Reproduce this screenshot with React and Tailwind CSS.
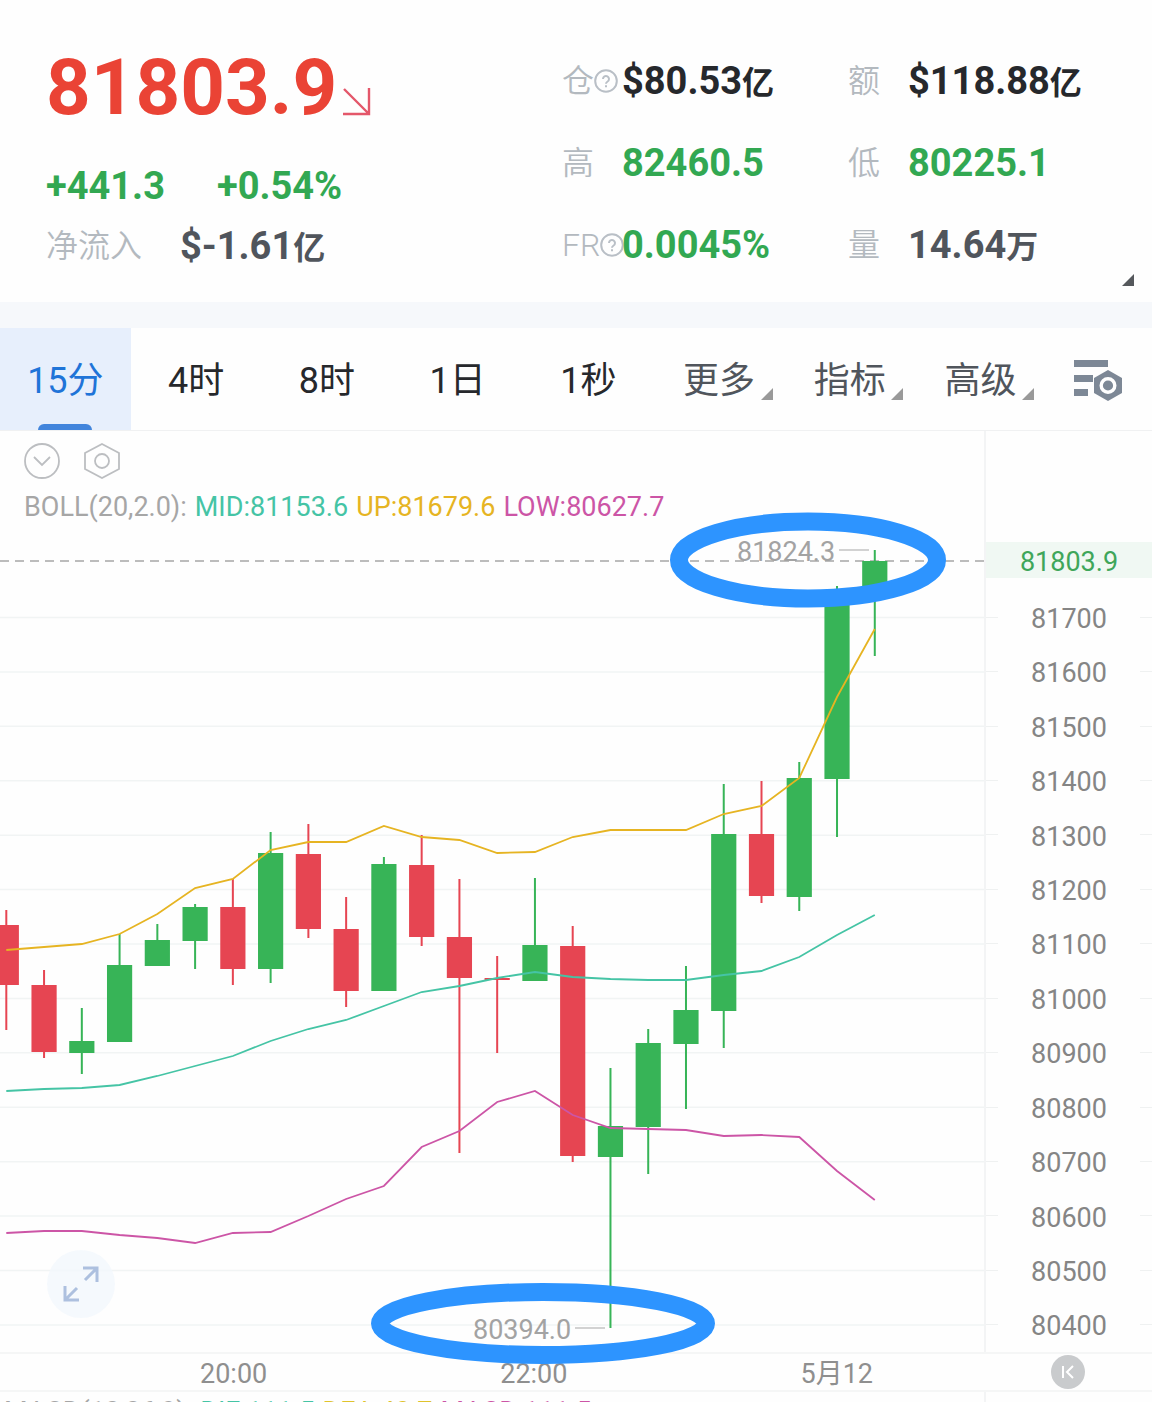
import { useState } from 'react';

const stats = [
  { label: '仓', help: true, value: '$80.53', unit: '亿', color: 'text-[#26282c]' },
  { label: '额', value: '$118.88', unit: '亿', color: 'text-[#26282c]' },
  { label: '高', value: '82460.5', color: 'text-[#32a852]' },
  { label: '低', value: '80225.1', color: 'text-[#32a852]' },
  { label: 'FR', help: true, value: '0.0045%', color: 'text-[#32a852]' },
  { label: '量', value: '14.64', unit: '万', color: 'text-[#50555c]' }
];

const tabs = [
  { label: '15分' },
  { label: '4时' },
  { label: '8时' },
  { label: '1日' },
  { label: '1秒' },
  { label: '更多', menu: true },
  { label: '指标', menu: true },
  { label: '高级', menu: true }
];

const prices = [81700, 81600, 81500, 81400, 81300, 81200, 81100, 81000, 80900, 80800, 80700, 80600, 80500, 80400];

// high, body top, body bottom, low, direction
const candles = [
  [910, 925, 985, 1030, 'down'],
  [970, 985, 1052, 1058, 'down'],
  [1008, 1041, 1053, 1074, 'up'],
  [934, 965, 1042, 1042, 'up'],
  [924, 940, 966, 966, 'up'],
  [904, 907, 941, 969, 'up'],
  [879, 907, 969, 985, 'down'],
  [832, 853, 969, 983, 'up'],
  [824, 854, 929, 938, 'down'],
  [897, 929, 991, 1007, 'down'],
  [857, 864, 991, 991, 'up'],
  [835, 865, 937, 946, 'down'],
  [879, 937, 978, 1153, 'down'],
  [956, 978, 980, 1053, 'down'],
  [878, 945, 981, 981, 'up'],
  [926, 946, 1156, 1162, 'down'],
  [1068, 1126, 1157, 1328, 'up'],
  [1029, 1043, 1127, 1174, 'up'],
  [966, 1010, 1044, 1109, 'up'],
  [784, 834, 1011, 1048, 'up'],
  [781, 834, 896, 903, 'down'],
  [762, 778, 897, 911, 'up'],
  [586, 598, 779, 837, 'up'],
  [550, 561, 590, 656, 'up']
];

const bands = [
  { color: '#e6b422', ys: [950, 947, 944, 934, 914, 888, 879, 850, 842, 842, 826, 837, 840, 853, 852, 837, 830, 830, 830, 814, 806, 778, 697, 629] },
  { color: '#45c4a5', ys: [1091, 1089, 1088, 1085, 1076, 1066, 1056, 1041, 1029, 1020, 1006, 992, 986, 978, 972, 977, 979, 980, 980, 975, 971, 957, 935, 915] },
  { color: '#cc55a6', ys: [1233, 1231, 1231, 1235, 1238, 1243, 1233, 1232, 1216, 1199, 1186, 1147, 1131, 1102, 1091, 1115, 1128, 1129, 1130, 1136, 1135, 1137, 1171, 1200] }
];

const STEP = 37.76;
const xAt = (i) => 6.3 + i * STEP;
const gridY = (i) => 617.5 + i * 54.42;

function HelpIcon() {
  return (
    <svg viewBox="0 0 24 24" className="h-6 w-6 shrink-0" fill="none" stroke="#b9bfc6" strokeWidth="2">
      <circle cx="12" cy="12" r="10.8" />
      <path d="M9 10a3 3 0 1 1 4.6 2.5c-1 .6-1.6 1-1.6 2.2" />
      <path d="M12 16.2v2" />
    </svg>
  );
}

function Corner({ className }) {
  return (
    <svg viewBox="0 0 12 12" className={`h-3 w-3 ${className}`} fill="currentColor">
      <path d="M12 0v12H0z" />
    </svg>
  );
}

function Header() {
  return (
    <header className="relative grid grid-cols-[562fr_590fr] pb-4">
      <div className="pl-[46px] pt-10">
        <div className="flex items-center gap-1.5">
          <h1 className="text-[78px] leading-[96px] font-bold text-[#ea4335]">81803.9</h1>
          <svg viewBox="0 0 28 28" className="mt-7 h-7 w-7" fill="none" stroke="#e4576a" strokeWidth="2.4">
            <path d="M1 1l25 25M26 0v26H0" />
          </svg>
        </div>
        <div className="mt-[18px] flex h-16 items-center gap-[52px] text-[38px] font-bold text-[#32a852]">
          <span>+441.3</span>
          <span>+0.54%</span>
        </div>
        <div className="flex h-14 items-center gap-[38px] whitespace-nowrap">
          <span className="text-[32px] font-[350] text-[#b3b9bf]">净流入</span>
          <span className="text-[38px] font-bold text-[#50555c]">
            $-1.61<span className="text-[32px]">亿</span>
          </span>
        </div>
      </div>
      <dl className="grid auto-rows-[82px] grid-cols-[286fr_304fr] pt-10">
        {stats.map(({ label, help, value, unit, color }) => (
          <div key={label} className="flex items-center whitespace-nowrap">
            <dt className="flex w-[60px] shrink-0 items-center text-[32px] font-[350] text-[#b3b9bf]">
              {label}
              {help && <HelpIcon />}
            </dt>
            <dd className={`text-[38px] font-bold ${color}`}>
              {value}
              {unit && <span className="text-[32px]">{unit}</span>}
            </dd>
          </div>
        ))}
      </dl>
      <Corner className="absolute right-[18px] bottom-4 text-[#55585c]" />
    </header>
  );
}

function PeriodTabs({ active, onChange }) {
  return (
    <nav className="flex h-[103px] border-b border-[#f0f1f2]">
      {tabs.map(({ label, menu }) => (
        <button
          key={label}
          onClick={() => onChange(label)}
          className={`relative flex-1 pt-1 text-[36px] ${
            active === label ? 'bg-[#e7effc] text-[#1f74d8]' : menu ? 'text-[#50555c]' : 'text-[#26282c]'
          }`}
        >
          {label}
          {menu && <Corner className="absolute right-3 bottom-[30px] text-[#999999]" />}
          {active === label && (
            <span className="absolute bottom-0 left-1/2 h-1.5 w-[54px] -translate-x-1/2 rounded-t-md bg-[#4285dc]" />
          )}
        </button>
      ))}
      <button aria-label="图表设置" className="flex w-[106px] items-center justify-center pr-0.5">
        <svg viewBox="0 0 48 44" className="h-11 w-12">
          <path d="M0 3h34v7H0zM0 18h19v7H0zM0 32h14v7H0z" fill="#7d8896" />
          <path d="M34 13l14 8v15l-14 8-14-8V21z" fill="#7d8896" />
          <circle cx="34" cy="28.5" r="6.8" fill="#7d8896" stroke="#fff" strokeWidth="3.4" />
        </svg>
      </button>
    </nav>
  );
}

function CandleChart() {
  return (
    <svg viewBox="0 431 984 921" className="block h-auto w-full overflow-visible">
      {prices.map((p, i) => (
        <path key={p} d={`M0 ${gridY(i)}H984`} stroke="#f1f4f4" strokeWidth="1.5" />
      ))}
      <path d="M0 561H984" stroke="#a6a6a6" strokeWidth="1.6" strokeDasharray="9 6" />
      {candles.map(([high, top, bottom, low, dir], i) => (
        <g key={i} fill={dir === 'up' ? '#37b457' : '#e64552'}>
          <rect x={xAt(i) - 1} y={high} width="2" height={low - high} />
          <rect x={xAt(i) - 12.6} y={top} width="25.2" height={bottom - top} />
        </g>
      ))}
      {bands.map(({ color, ys }) => (
        <polyline key={color} points={ys.map((y, i) => `${xAt(i)},${y}`).join(' ')} fill="none" stroke={color} strokeWidth="1.8" />
      ))}
      <g fill="#a3a3a3" fontSize="27">
        <text x="737" y="561">81824.3</text>
        <text x="473" y="1339">80394.0</text>
      </g>
      <path d="M839 550h30M575 1328h30" stroke="#c4c4c4" strokeWidth="1.6" />
      <g fill="none" stroke="#2d94ff" strokeWidth="18">
        <ellipse cx="808" cy="560" rx="129" ry="38.5" />
        <ellipse cx="543" cy="1323.5" rx="163" ry="31.5" />
      </g>
    </svg>
  );
}

function PriceAxis() {
  return (
    <div className="flex w-[168px] shrink-0 flex-col border-l-2 border-[#f3f4f5] text-center text-[27px] text-[#858585]">
      <div className="flex flex-[159_1_0px] flex-col justify-end">
        <div className="mb-3 bg-[#f0f8f3] pt-1 leading-8 text-[#3fa65a]">81803.9</div>
      </div>
      <div className="flex flex-[762_1_0px] flex-col">
        {prices.map((p) => (
          <div key={p} className="flex flex-1 items-center justify-between">
            <span className="h-px w-3 bg-[#eff1f1]" />
            <span className="pt-1">{p}</span>
            <span className="h-px w-3 bg-[#eff1f1]" />
          </div>
        ))}
      </div>
    </div>
  );
}

export default function App() {
  const [period, setPeriod] = useState('15分');

  return (
    <div className="overflow-hidden bg-[#fefefe] font-['Roboto','Noto_Sans_CJK_SC',sans-serif]">
      <Header />
      <div className="h-[26px] bg-[#f6f8fb]" />
      <PeriodTabs active={period} onChange={setPeriod} />

      <main>
        <section className="flex">
          <div className="relative min-w-0 flex-1">
            <CandleChart />
            <div className="absolute top-3 left-6">
              <div className="flex gap-6">
                <button aria-label="收起">
                  <svg viewBox="0 0 36 36" className="h-9 w-9" fill="none" stroke="#bcbec1" strokeWidth="1.8">
                    <circle cx="18" cy="18" r="17" />
                    <path d="M10 14l8 8 8-8" />
                  </svg>
                </button>
                <button aria-label="指标设置">
                  <svg viewBox="0 0 36 36" className="h-9 w-9" fill="none" stroke="#bcbec1" strokeWidth="1.8">
                    <path d="M18 1l17 9v16l-17 9-17-9V10z" />
                    <circle cx="18" cy="18" r="7" />
                  </svg>
                </button>
              </div>
              <p className="mt-2.5 flex gap-2 text-[27px] leading-9 whitespace-nowrap text-[#a6a6a6]">
                <span>BOLL(20,2.0):</span>
                <span className="text-[#45c4a5]">MID:81153.6</span>
                <span className="text-[#e6b422]">UP:81679.6</span>
                <span className="text-[#cc55a6]">LOW:80627.7</span>
              </p>
            </div>
            <button
              aria-label="全屏"
              className="absolute bottom-[34px] left-[47px] flex h-[68px] w-[68px] items-center justify-center rounded-full bg-[#f3f8fd]/80"
            >
              <svg viewBox="0 0 36 36" className="h-9 w-9" fill="none" stroke="#adc0df" strokeWidth="3">
                <path d="M22 14L34 2M20 2h14v14M14 22L2 34M2 20v14h14" />
              </svg>
            </button>
          </div>
          <PriceAxis />
        </section>

        <section className="flex h-10 items-center border-y-2 border-[#f5f6f6] text-[27px] text-[#8f8f8f]">
          <div className="flex flex-1 justify-between pt-1 pr-[111px] pl-[200px]">
            <span>20:00</span>
            <span>22:00</span>
            <span>5月12</span>
          </div>
          <div className="flex w-[168px] justify-center">
            <button aria-label="回到最新" className="flex h-[34px] w-[34px] items-center justify-center rounded-full bg-[#c9cbcd]">
              <svg viewBox="0 0 14 14" className="h-3.5 w-3.5" fill="none" stroke="#fff" strokeWidth="2">
                <path d="M2 1v12M12 1L6 7l6 6" />
              </svg>
            </button>
          </div>
        </section>

        {/* MACD pane, collapsed to its top edge */}
        <section className="flex h-2.5 overflow-hidden">
          <p className="flex min-w-0 flex-1 gap-2 pl-1 text-[27px] leading-10 whitespace-nowrap text-[#a6a6a6]">
            <span>MACD(12,26,9):</span>
            <span className="text-[#45c4a5]">DIF:111.5</span>
            <span className="text-[#e0c32c]">DEA:40.7</span>
            <span className="text-[#cc55a6]">MACD:111.5</span>
          </p>
          <div className="w-[168px] shrink-0 border-l-2 border-[#f3f4f5]" />
        </section>
      </main>
    </div>
  );
}
